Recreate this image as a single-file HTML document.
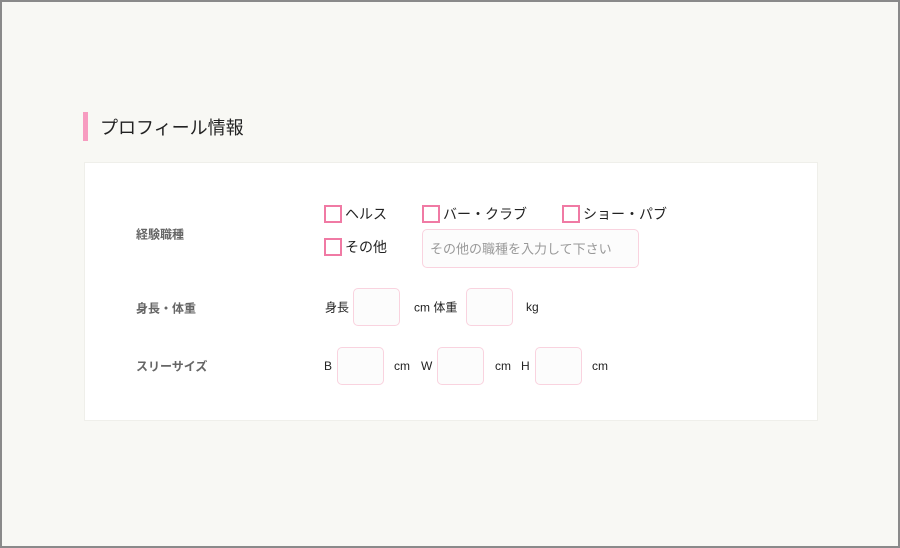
<!DOCTYPE html>
<html><head><meta charset="utf-8"><style>
*{margin:0;padding:0;box-sizing:border-box}
body{width:900px;height:548px;background:#f8f8f4;position:relative;overflow:hidden;font-family:"Liberation Sans","Noto Sans CJK JP",sans-serif;color:#222}
.frame{position:absolute;left:0;top:0;width:900px;height:548px;border:2px solid #8a8a8a;pointer-events:none}
.a{position:absolute;white-space:nowrap}
.bar{position:absolute;left:83px;top:112px;width:5px;height:29px;background:#f79cc0}
.card{position:absolute;left:84px;top:162px;width:734px;height:259px;background:#fff;border:1px solid #efefea}
.lbl{font-size:12px;font-weight:bold;color:#666;transform:translateY(-50%)}
.cb{position:absolute;width:18px;height:18px;border:2px solid #f07aa4;background:#fff}
.t14{font-size:14px;transform:translateY(-50%)}
.t12{font-size:12px;transform:translateY(-50%)}
.box{position:absolute;width:47px;height:38px;border:1.5px solid #f9d3df;border-radius:5px;background:#fcfcfc}
</style></head><body>
<div class="bar"></div>
<div class="a" style="left:100px;top:127px;font-size:18px;transform:translateY(-50%)">プロフィール情報</div>
<div class="card"></div>
<div class="a lbl" style="left:136px;top:234px">経験職種</div>
<div class="a lbl" style="left:136px;top:308px">身長・体重</div>
<div class="a lbl" style="left:136px;top:366px">スリーサイズ</div>

<div class="cb" style="left:324px;top:205px"></div><div class="a t14" style="left:345px;top:214px">ヘルス</div>
<div class="cb" style="left:422px;top:205px"></div><div class="a t14" style="left:443px;top:214px">バー・クラブ</div>
<div class="cb" style="left:562px;top:205px"></div><div class="a t14" style="left:583px;top:214px">ショー・パブ</div>
<div class="cb" style="left:324px;top:238px"></div><div class="a t14" style="left:345px;top:247px">その他</div>
<div class="box" style="left:422px;top:229px;width:217px;height:39px"></div>
<div class="a" style="left:430px;top:248px;font-size:13px;color:#999;transform:translateY(-50%)">その他の職種を入力して下さい</div>

<div class="a t12" style="left:325px;top:307px">身長</div>
<div class="box" style="left:353px;top:288px"></div>
<div class="a t12" style="left:414px;top:307px">cm 体重</div>
<div class="box" style="left:466px;top:288px"></div>
<div class="a t12" style="left:526px;top:307px">kg</div>

<div class="a t12" style="left:324px;top:366px">B</div>
<div class="box" style="left:337px;top:347px"></div>
<div class="a t12" style="left:394px;top:366px">cm</div>
<div class="a t12" style="left:421px;top:366px">W</div>
<div class="box" style="left:437px;top:347px"></div>
<div class="a t12" style="left:495px;top:366px">cm</div>
<div class="a t12" style="left:521px;top:366px">H</div>
<div class="box" style="left:535px;top:347px"></div>
<div class="a t12" style="left:592px;top:366px">cm</div>
<div class="frame"></div>
</body></html>
